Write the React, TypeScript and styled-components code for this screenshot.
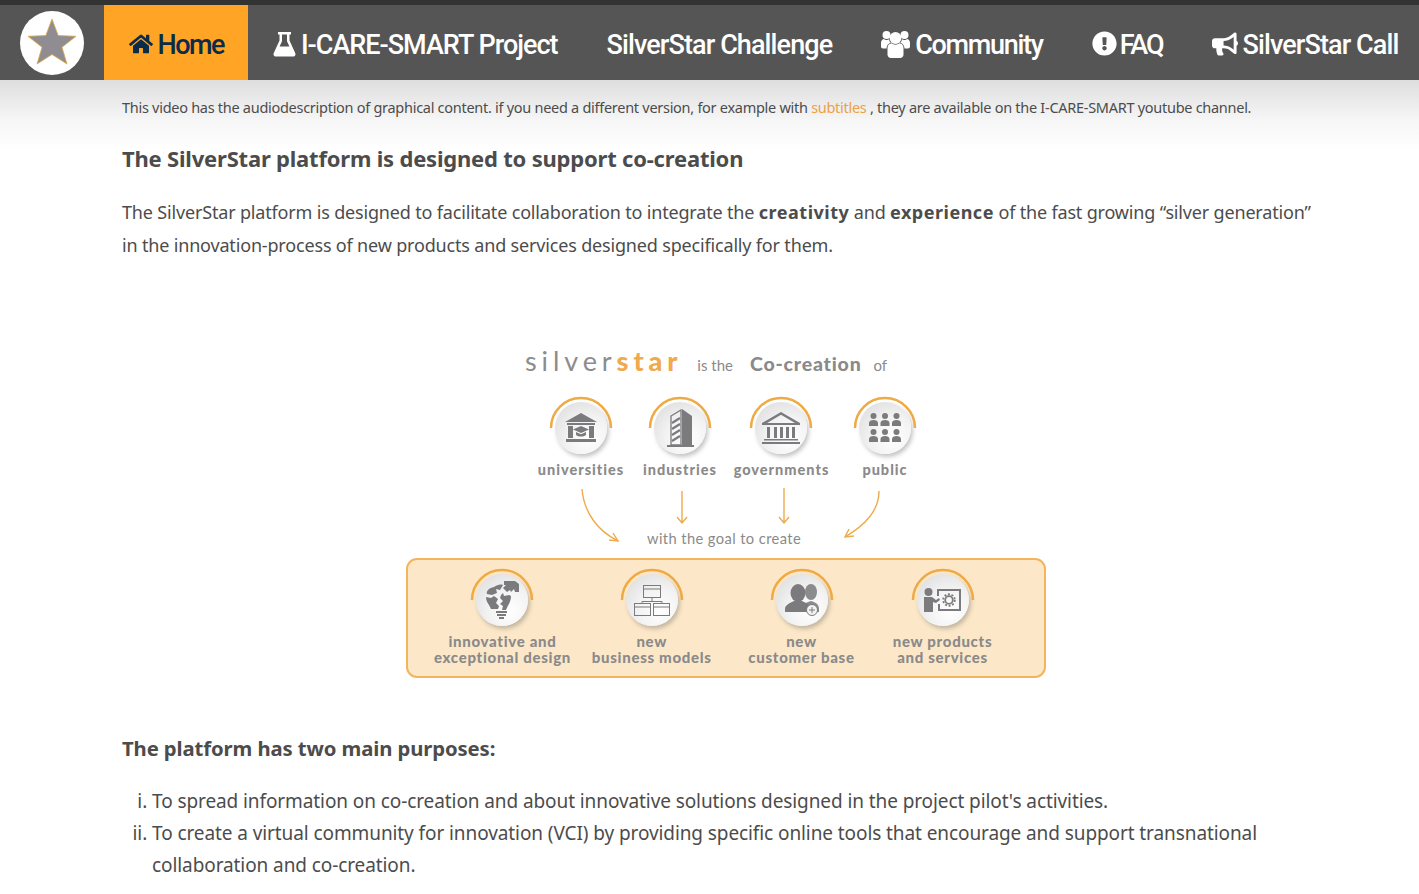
import { ReactNode } from "react";
import styled, { createGlobalStyle } from "styled-components";
import { FaBullhorn, FaExclamationCircle, FaHome } from "react-icons/fa";

const ICON = "#7b7a7c";

const FlaskIcon = () => (
  <svg width="23" height="26" viewBox="0 0 23 26">
    <path d="M5 1h13v2.4h-1.5v6.2L22.2 22c.9 2-.3 3.6-2.4 3.6H3.2C1.100 25.600-.1 24 .8 22L6.500 9.600V3.400H5z" fill="#fff" />
    <path d="M9 3.400v6.900L6.600 15.500h9.800L14 10.300V3.400z" fill="#555" />
  </svg>
);

const UsersIcon = () => (
  <svg width="29" height="28" viewBox="0 0 29 28" fill="#fff">
    <circle cx="14.500" cy="8" r="6" />
    <path d="M6.500 18c0-3 2-4.500 4-4.700 2.500 1.800 5.500 1.800 8 0 2 .2 4 1.700 4 4.700v6.500c0 2-1.500 3.500-3.500 3.500H10c-2 0-3.500-1.500-3.500-3.500z" />
    <circle cx="5.500" cy="5" r="4" />
    <circle cx="23.500" cy="5" r="4" />
    <path d="M0 13c0-2.500 1.500-3.800 3-4 1 1 3.500 1.400 5 .3.200 1.400.8 2.700 1.700 3.500-2.300.8-4.200 2.900-4.200 5.700H2c-1.200 0-2-.8-2-2z" />
    <path d="M29 13c0-2.500-1.500-3.800-3-4-1 1-3.500 1.400-5 .3-.2 1.400-.8 2.700-1.700 3.500 2.300.8 4.200 2.900 4.200 5.700H27c1.200 0 2-.8 2-2z" />
  </svg>
);

const LogoStar = () => (
  <svg width="52" height="52" viewBox="0 0 52 52">
    <polygon
      points="26,2 32.200,18.500 50,19.300 36,30.200 41,47 26,37.500 11,47 16,30.200 2,19.300 19.800,18.500"
      fill="#8f8d91"
      stroke="#e0a945"
      strokeWidth=".8"
    />
  </svg>
);

const UniversityIcon = () => (
  <svg width="32" height="30" viewBox="0 0 32 30" fill={ICON}>
    <polygon points="0,9 16,0 32,9" />
    <rect x="2" y="10" width="28" height="2" />
    <rect x="3" y="13" width="5" height="12" />
    <rect x="24" y="13" width="5" height="12" />
    <polygon points="16,13 24,16.500 16,20 8,16.500" />
    <path d="M11 19v3c3 2 7 2 10 0v-3l-5 2.200z" />
    <rect x="1" y="26" width="30" height="3" />
  </svg>
);

const BuildingIcon = () => (
  <svg width="27" height="39" viewBox="0 0 27 39">
    <polygon points="15,0 25,7 25,36 15,36" fill={ICON} />
    <path d="M4 7 14 1v35H4z" fill="none" stroke={ICON} strokeWidth="1.300" />
    <path d="M5 14l8-5M5 20l8-5M5 26l8-5M5 32l8-5" stroke={ICON} strokeWidth="2.200" />
    <rect x="0" y="36" width="27" height="2" fill={ICON} />
  </svg>
);

const GovernmentIcon = () => (
  <svg width="38" height="32" viewBox="0 0 38 32" fill={ICON}>
    <path d="M19 0 38 11v2H0v-2zM19 2.800 5 11h28z" fillRule="evenodd" />
    <rect x="5" y="15" width="3" height="11" />
    <rect x="12" y="15" width="3" height="11" />
    <rect x="18" y="15" width="3" height="11" />
    <rect x="24" y="15" width="3" height="11" />
    <rect x="30" y="15" width="3" height="11" />
    <rect x="2" y="27" width="34" height="1.500" />
    <rect x="0" y="30" width="38" height="2" />
  </svg>
);

const PublicIcon = () => (
  <svg width="32" height="30" viewBox="0 0 32 30" fill={ICON}>
    {[0, 16].map((y) =>
      [0, 11.500, 23].map((x) => (
        <g key={`${x}-${y}`}>
          <circle cx={x + 4.500} cy={y + 3} r="3" />
          <path d={`M${x} ${y + 13}v-3c0-2 2-3 4.500-3s4.500 1 4.500 3v3z`} />
        </g>
      )),
    )}
  </svg>
);

const IdeaIcon = () => (
  <svg width="34" height="39" viewBox="0 0 34 39" fill={ICON}>
    <path d="M18 7l3-3h-2V0h11l4 3v8h-4l-1-3-3 3-1-2-3 2z" />
    <path d="M9 6c3-2 6-3 9-2l-3 5-4-1 1 4-5 2-5-1C1 10 4 7 9 6z" />
    <path d="M1 16l5 1 3-2 4 3-2 4 3 3-1 3H6C4 23 1 21 1 16z" />
    <path d="M16 14l2-2 1 3 5-1 2 1c0 6-3 9-5 14h-4l1-4-3-2 3-3-3-3z" />
    <rect x="11" y="30" width="11" height="2" />
    <rect x="12" y="33" width="9" height="2" />
    <rect x="14" y="36" width="5" height="2" />
  </svg>
);

const ModelsIcon = () => (
  <svg width="36" height="31" viewBox="0 0 36 31" fill="none" stroke={ICON} strokeWidth="1">
    <rect x="9.500" y=".5" width="17" height="12" />
    <path d="M9.500 4h17M18 12.500v4M8 19v-2.500h20V19" />
    <rect x=".5" y="18.500" width="16" height="12" />
    <path d="M.5 22h16" />
    <rect x="19.500" y="18.500" width="16" height="12" />
    <path d="M19.500 22h16" />
  </svg>
);

const CustomersIcon = () => (
  <svg width="34" height="33" viewBox="0 0 34 33">
    <g fill="#8b8a8c">
      <ellipse cx="26" cy="8" rx="6" ry="8" />
      <path d="M18 28v-4c0-4 4-6 8-7 4 1 8 3 8 8v3z" />
    </g>
    <g fill={ICON}>
      <ellipse cx="13" cy="9" rx="7.500" ry="9" />
      <path d="M0 28v-3c0-4 5-6 9-8h8c4 2 9 4 9 8v3z" />
    </g>
    <circle cx="27" cy="26" r="5.500" fill="#f3f3f3" stroke={ICON} />
    <path d="M27 23v6M24 26h6" stroke={ICON} />
  </svg>
);

const ProductsIcon = () => (
  <svg width="38" height="24" viewBox="0 0 38 24" fill={ICON}>
    <path d="M13 1h24v22H14v-7h2v5h19V3H15v5h-2z" />
    <circle cx="4.500" cy="4" r="4" />
    <path d="M0 9h8l4 3 3-2 1 2-4 3-3-1v10H0z" />
    <circle cx="25" cy="12" r="3.800" fill="none" stroke={ICON} strokeWidth="1.800" />
    <circle cx="25" cy="12" r="5.800" fill="none" stroke={ICON} strokeWidth="1.800" strokeDasharray="2 1.650" />
  </svg>
);

const GlobalStyle = createGlobalStyle`
  html, body {
    margin: 0;
    padding: 0;
    background: #fff;
  }

  body {
    font-family: "Noto Sans", "Liberation Sans", sans-serif;
    color: #4c4c4c;
    overflow: hidden;
  }
`;

const Page = styled.div`
  height: 894px;
  overflow: hidden;
  border-top: 5px solid #333;
`;

const Nav = styled.nav`
  height: 75px;
  display: flex;
  align-items: stretch;
  background: #555;
`;

const LogoCell = styled.div`
  flex: 0 0 104px;
  display: flex;
  align-items: center;
  justify-content: center;
`;

const Logo = styled.div`
  width: 64px;
  height: 64px;
  margin-top: 1px;
  border-radius: 50%;
  background: #fff;
  display: flex;
  align-items: center;
  justify-content: center;
`;

const NavItem = styled.a<{ $active?: boolean; $tight?: number; $gap?: number }>`
  flex: none;
  display: flex;
  align-items: center;
  gap: ${(p) => p.$gap ?? 5}px;
  padding: 5px 24.5px 0;
  background: ${(p) => (p.$active ? "#ffa424" : "transparent")};
  color: ${(p) => (p.$active ? "#0b2b4a" : "#fff")};
  font-family: "Roboto", sans-serif;
  font-weight: 500;
  font-size: 27px;
  letter-spacing: ${(p) => p.$tight ?? -0.9}px;
  white-space: nowrap;

  svg {
    margin-top: -3px;
  }
`;

const Content = styled.main`
  padding: 17px 105px 0 122px;
  background: linear-gradient(#dedede 0, #f6f6f6 40px, #fff 70px) no-repeat;
`;

const Note = styled.p`
  margin: 0;
  font-size: 14.5px;
  line-height: 20px;
  letter-spacing: -0.28px;
  white-space: nowrap;
`;

const NoteLink = styled.a`
  color: #eda145;
`;

const Heading = styled.h2`
  margin: 27px 0 0;
  font-size: 22px;
  line-height: 28px;
  font-weight: 700;
  letter-spacing: -0.2px;
`;

const Paragraph = styled.p`
  margin: 24px 0 0;
  font-size: 18px;
  line-height: 33px;
  letter-spacing: -0.17px;
`;

const Strong = styled.strong`
  letter-spacing: 0.5px;
`;

const Diagram = styled.section`
  width: 640px;
  margin: 82px 0 0 284px;
  color: #8b8a8a;
  font-family: "Lato", sans-serif;
`;

const TitleRow = styled.div`
  height: 38px;
  display: flex;
  align-items: baseline;
  padding-left: 119px;
  white-space: nowrap;
`;

const Brand = styled.span`
  font-size: 27px;
  letter-spacing: 4.9px;
  color: #8d8c8c;
`;

const BrandAccent = styled.span`
  font-weight: 900;
  color: #efaa4c;
`;

const TitleSmall = styled.span<{ $left: number }>`
  margin-left: ${(p) => p.$left}px;
  font-size: 15px;
`;

const TitleStrong = styled.span`
  margin-left: 17px;
  font-size: 19.5px;
  font-weight: 900;
  letter-spacing: 0.8px;
`;

const SourceRow = styled.div`
  display: grid;
  grid-template-columns: 98px 100px 103px 104px;
  padding: 14px 0 0 126px;
  justify-items: center;
`;

const Item = styled.div`
  display: flex;
  flex-direction: column;
  align-items: center;
`;

const Badge = styled.div`
  position: relative;
  width: 64px;
  height: 60px;
  display: flex;
  justify-content: center;
  padding-top: 6px;
  box-sizing: border-box;
`;

const Arc = styled.svg`
  position: absolute;
  left: 0;
  top: 0;
`;

const Disc = styled.div`
  width: 52px;
  height: 52px;
  border-radius: 50%;
  display: flex;
  align-items: center;
  justify-content: center;
  background: radial-gradient(circle at 65% 70%, #fff 0, #f2f2f2 45%, #d8d8da 100%);
  box-shadow: 2px 3px 4px rgba(90, 90, 90, 0.35);
`;

const SourceLabel = styled.div`
  margin-top: 4px;
  font-size: 14.5px;
  line-height: 20px;
  font-weight: 900;
  letter-spacing: 1px;
  white-space: nowrap;
`;

const ArrowRow = styled.div`
  display: grid;
  height: 78px;
`;

const ArrowDrawing = styled.svg`
  grid-area: 1 / 1;
`;

const GoalText = styled.div`
  grid-area: 1 / 1;
  align-self: end;
  padding: 0 0 10px 241px;
  font-size: 14.700px;
  line-height: 20px;
  letter-spacing: 0.4px;
`;

const ResultBox = styled.div`
  box-sizing: border-box;
  height: 120px;
  padding: 8px 0 0 20px;
  display: grid;
  grid-template-columns: 149px 149.500px 150px 132px;
  justify-items: center;
  background: #fce8c8;
  border: 2px solid #f3b45c;
  border-radius: 11px;
`;

const ResultLabel = styled.div`
  margin-top: 5px;
  text-align: center;
  font-size: 15px;
  line-height: 16px;
  font-weight: 900;
  letter-spacing: 0.7px;
  white-space: nowrap;
`;

const SubHeading = styled.h3`
  margin: 56px 0 0;
  font-size: 20.3px;
  line-height: 28px;
  font-weight: 700;
  letter-spacing: -0.1px;
`;

const Purposes = styled.ol`
  margin: 23px 0 0;
  padding: 0 0 0 30px;
  list-style: lower-roman;
  font-size: 19px;
  line-height: 32px;
  letter-spacing: -0.09px;
`;

const BadgeIcon = ({ children }: { children: ReactNode }) => (
  <Badge>
    <Arc width="64" height="36" viewBox="0 0 64 36" fill="none">
      <path d="M2 32a30 30 0 0 1 60 0" stroke="#f0aa45" strokeWidth="2.500" />
    </Arc>
    <Disc>{children}</Disc>
  </Badge>
);

const sources = [
  { label: "universities", icon: <UniversityIcon /> },
  { label: "industries", icon: <BuildingIcon /> },
  { label: "governments", icon: <GovernmentIcon /> },
  { label: "public", icon: <PublicIcon /> },
];

const results = [
  { lines: ["innovative and", "exceptional design"], icon: <IdeaIcon /> },
  { lines: ["new", "business models"], icon: <ModelsIcon /> },
  { lines: ["new", "customer base"], icon: <CustomersIcon /> },
  { lines: ["new products", "and services"], icon: <ProductsIcon /> },
];

export default function App() {
  return (
    <Page>
      <GlobalStyle />
      <Nav>
        <LogoCell>
          <Logo>
            <LogoStar />
          </Logo>
        </LogoCell>
        <NavItem $active $tight={-1.5}>
          <FaHome size={24} />
          Home
        </NavItem>
        <NavItem $tight={-1}>
          <FlaskIcon />
          I-CARE-SMART Project
        </NavItem>
        <NavItem>SilverStar Challenge</NavItem>
        <NavItem $tight={-1.3}>
          <UsersIcon />
          Community
        </NavItem>
        <NavItem $tight={-2} $gap={3}>
          <FaExclamationCircle size={25} />
          FAQ
        </NavItem>
        <NavItem>
          <FaBullhorn size={26} />
          SilverStar Call
        </NavItem>
      </Nav>
      <Content>
        <Note>
          This video has the audiodescription of graphical content. if you need a different version, for example with{" "}
          <NoteLink>subtitles</NoteLink> , they are available on the I-CARE-SMART youtube channel.
        </Note>
        <Heading>The SilverStar platform is designed to support co-creation</Heading>
        <Paragraph>
          The SilverStar platform is designed to facilitate collaboration to integrate the <Strong>creativity</Strong>{" "}
          and <Strong>experience</Strong> of the fast growing “silver generation” in the innovation-process of new
          products and services designed specifically for them.
        </Paragraph>
        <Diagram>
          <TitleRow>
            <Brand>
              silver<BrandAccent>star</BrandAccent>
            </Brand>
            <TitleSmall $left={15}>is the</TitleSmall>
            <TitleStrong>Co-creation</TitleStrong>
            <TitleSmall $left={12}>of</TitleSmall>
          </TitleRow>
          <SourceRow>
            {sources.map((s) => (
              <Item key={s.label}>
                <BadgeIcon>{s.icon}</BadgeIcon>
                <SourceLabel>{s.label}</SourceLabel>
              </Item>
            ))}
          </SourceRow>
          <ArrowRow>
            <ArrowDrawing width="640" height="78" viewBox="0 0 640 78" fill="none" stroke="#efaa4c" strokeWidth="1.400">
              <path d="M176 9c2 24 16 42 36 52" />
              <path d="M203 60l9 1-5-8" />
              <path d="M276 11v32M271 37l5 6 5-6" />
              <path d="M378 8v35M373 37l5 6 5-6" />
              <path d="M473 11c0 20-14 34-34 46" />
              <path d="M448 56l-9 1 4-8" />
            </ArrowDrawing>
            <GoalText>with the goal to create</GoalText>
          </ArrowRow>
          <ResultBox>
            {results.map((r) => (
              <Item key={r.lines[1]}>
                <BadgeIcon>{r.icon}</BadgeIcon>
                <ResultLabel>
                  {r.lines[0]}
                  <br />
                  {r.lines[1]}
                </ResultLabel>
              </Item>
            ))}
          </ResultBox>
        </Diagram>
        <SubHeading>The platform has two main purposes:</SubHeading>
        <Purposes>
          <li>To spread information on co-creation and about innovative solutions designed in the project pilot's activities.</li>
          <li>
            To create a virtual community for innovation (VCI) by providing specific online tools that encourage and
            support transnational collaboration and co-creation.
          </li>
        </Purposes>
      </Content>
    </Page>
  );
}
